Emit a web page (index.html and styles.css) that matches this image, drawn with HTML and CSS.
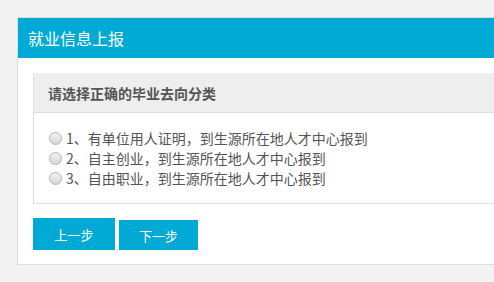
FILE: index.html
```html
<!DOCTYPE html>
<html lang="zh-CN">
<head>
    <meta charset="UTF-8">
    <title>就业信息上报</title>
    <link rel="stylesheet" href="styles.css">
</head>
<body>
    <div class="panel">
        <div class="panel-head">就业信息上报</div>
        <div class="panel-body">
            <div class="box">
                <div class="box-head">请选择正确的毕业去向分类</div>
                <div class="box-body">
                    <label class="opt"><input type="radio" name="qx"> 1、有单位用人证明，到生源所在地人才中心报到</label>
                    <label class="opt"><input type="radio" name="qx"> 2、自主创业，到生源所在地人才中心报到</label>
                    <label class="opt"><input type="radio" name="qx"> 3、自由职业，到生源所在地人才中心报到</label>
                </div>
            </div>
            <div class="actions">
                <button class="btn btn-prev">上一步</button>
                <button class="btn">下一步</button>
            </div>
        </div>
    </div>
</body>
</html>
```

FILE: styles.css
```css
html, body {
    margin: 0;
    overflow: hidden;
}
body {
    padding: 17px 0 0 17px;
    height: 282px;
    box-sizing: border-box;
    background: #f3f3f3;
    font-family: "Microsoft YaHei", "Noto Sans CJK SC", sans-serif;
    color: #555;
}
.panel {
    background: #fff;
    border: 1px solid #ddd;
    border-right: none;
}
.panel-head {
    height: 40px;
    line-height: 40px;
    padding-left: 10px;
    background: #00aad5;
    color: #fff;
    font-size: 16px;
}
.panel-body {
    padding: 15px 0 14px 15px;
}
.box {
    border: 1px solid #ddd;
    border-top-color: #eee;
    border-right: none;
}
.box-head {
    height: 38px;
    line-height: 38px;
    padding-left: 14px;
    background: #eee;
    border-bottom: 1px solid #ddd;
    font-size: 14px;
    font-weight: bold;
    color: #555;
}
.box-body {
    padding: 15px 0 15px 15px;
}
.opt {
    display: flex;
    align-items: center;
    height: 20px;
    font-size: 14px;
    color: #555;
    white-space: nowrap;
}
.opt input {
    appearance: none;
    -webkit-appearance: none;
    width: 13px;
    height: 13px;
    margin: 0 4px 0 0;
    border: 1px solid #b4b4b4;
    border-radius: 50%;
    background: linear-gradient(#f2f2f2, #d6d6d6);
    box-sizing: border-box;
}
.actions {
    display: flex;
    align-items: flex-end;
    gap: 4px;
    margin-top: 14px;
}
.btn {
    width: 79px;
    height: 30px;
    border: none;
    padding: 0;
    background: #00aad5;
    color: #fff;
    font-family: inherit;
    font-size: 13px;
}
.btn-prev {
    width: 82px;
    height: 32px;
}
```
